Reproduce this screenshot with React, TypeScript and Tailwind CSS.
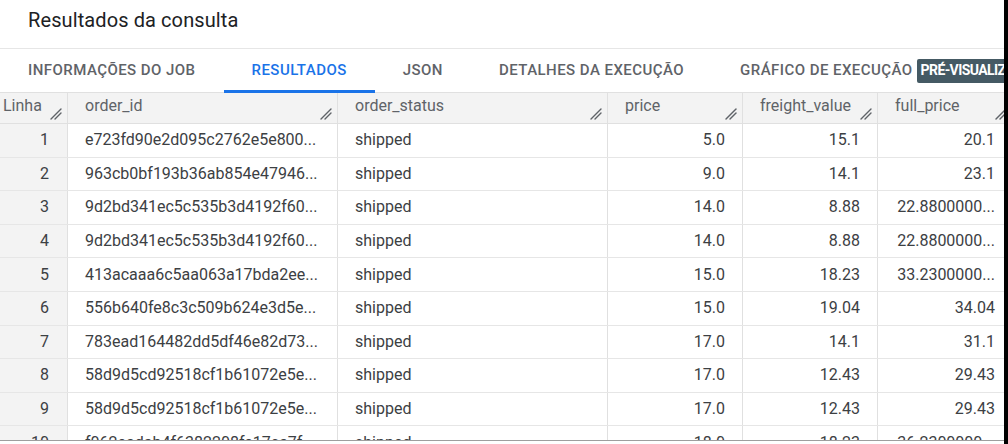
import React from "react";

const columns = [
  { key: "linha", label: "Linha", width: "w-[68px]" },
  { key: "order_id", label: "order_id", width: "w-[270px]" },
  { key: "order_status", label: "order_status", width: "w-[270px]" },
  { key: "price", label: "price", width: "w-[135px]" },
  { key: "freight_value", label: "freight_value", width: "w-[135px]" },
  { key: "full_price", label: "full_price", width: "w-[135px]" },
];

const rows = [
  ["1", "e723fd90e2d095c2762e5e800...", "shipped", "5.0", "15.1", "20.1"],
  ["2", "963cb0bf193b36ab854e47946...", "shipped", "9.0", "14.1", "23.1"],
  ["3", "9d2bd341ec5c535b3d4192f60...", "shipped", "14.0", "8.88", "22.8800000..."],
  ["4", "9d2bd341ec5c535b3d4192f60...", "shipped", "14.0", "8.88", "22.8800000..."],
  ["5", "413acaaa6c5aa063a17bda2ee...", "shipped", "15.0", "18.23", "33.2300000..."],
  ["6", "556b640fe8c3c509b624e3d5e...", "shipped", "15.0", "19.04", "34.04"],
  ["7", "783ead164482dd5df46e82d73...", "shipped", "17.0", "14.1", "31.1"],
  ["8", "58d9d5cd92518cf1b61072e5e...", "shipped", "17.0", "12.43", "29.43"],
  ["9", "58d9d5cd92518cf1b61072e5e...", "shipped", "17.0", "12.43", "29.43"],
  ["10", "f062eadab4f6382208fe17ca7f...", "shipped", "18.0", "18.23", "36.2300000..."],
];

const tabs = [
  { label: "INFORMAÇÕES DO JOB", active: false },
  { label: "RESULTADOS", active: true },
  { label: "JSON", active: false },
  { label: "DETALHES DA EXECUÇÃO", active: false },
  { label: "GRÁFICO DE EXECUÇÃO", active: false },
];

function ResizeHandle() {
  return (
    <svg width="12" height="12" viewBox="0 0 12 12" className="absolute right-[5px] bottom-[3px]">
      <path d="M1 11 L11 1" stroke="#5f6368" strokeWidth="1.4" strokeLinecap="round" />
      <path d="M5 11 L11 5" stroke="#5f6368" strokeWidth="1.4" strokeLinecap="round" />
    </svg>
  );
}

export default function App() {
  return (
    <div className="w-[1008px] h-[444px] overflow-hidden flex bg-white font-['Roboto',sans-serif]">
      <div className="w-[1004px] flex flex-col overflow-hidden">
        {/* título */}
        <div className="h-[49px] shrink-0 border-b border-[#e6e6e6] pl-[28px] pt-[6px]">
          <h1 className="text-[20px] leading-[28px] tracking-[0.1px] text-[#202124]">Resultados da consulta</h1>
        </div>

        {/* abas */}
        <div className="h-[44px] shrink-0 flex items-stretch border-b border-[#e0e0e0] whitespace-nowrap">
          {tabs.map((tab, i) => (
            <div
              key={tab.label}
              className={
                (tab.active ? "text-[#1a73e8] " : "text-[#5f6368] ") +
                (i === tabs.length - 1 ? "pl-[28px] pr-[4px] " : "px-[28px] ") +
                "relative flex items-center text-[15px] font-medium tracking-[0.45px]"
              }
            >
              {tab.label}
              {tab.active && <div className="absolute left-0 right-0 bottom-[-1px] h-[3px] bg-[#1a73e8]" />}
            </div>
          ))}
          <div className="flex items-center">
            <span className="bg-[#455a64] text-white text-[14px] font-bold tracking-[-0.6px] px-[4px] h-[24px] flex items-center rounded-[2px]">
              PRÉ-VISUALIZAÇÃO
            </span>
          </div>
        </div>

        {/* tabela */}
        <div className="h-[348px] shrink-0 overflow-hidden border-b border-[#9e9e9e]">
          <div className="flex h-[31px] bg-[#f3f3f3] border-b border-[#e0e0e0]">
            {columns.map((c, i) => (
              <div
                key={c.key}
                className={
                  (i === 0 ? "pl-[3px] " : "pl-[17px] ") +
                  c.width +
                  " relative shrink-0 border-r border-[#e0e0e0] text-[16px] leading-[26px] text-[#5f6368]"
                }
              >
                {c.label}
                <ResizeHandle />
              </div>
            ))}
          </div>
          {rows.map((r) => (
            <div key={r[0]} className="flex h-[33.6px] border-b border-[#e6e6e6] text-[16px] text-[#3c4043]">
              <div className="w-[68px] shrink-0 bg-[#f3f3f3] border-r border-[#e0e0e0] flex items-center justify-end pr-[18px]">
                {r[0]}
              </div>
              <div className="w-[270px] shrink-0 border-r border-[#e0e0e0] flex items-center pl-[17px] whitespace-nowrap">
                {r[1]}
              </div>
              <div className="w-[270px] shrink-0 border-r border-[#e0e0e0] flex items-center pl-[17px]">{r[2]}</div>
              <div className="w-[135px] shrink-0 border-r border-[#e0e0e0] flex items-center justify-end pr-[17px]">
                {r[3]}
              </div>
              <div className="w-[135px] shrink-0 border-r border-[#e0e0e0] flex items-center justify-end pr-[17px]">
                {r[4]}
              </div>
              <div className="w-[135px] shrink-0 border-r border-[#e0e0e0] flex items-center justify-end pr-[17px] whitespace-nowrap">
                {r[5]}
              </div>
            </div>
          ))}
        </div>
      </div>
      <div className="w-[4px] h-full bg-black" />
    </div>
  );
}
